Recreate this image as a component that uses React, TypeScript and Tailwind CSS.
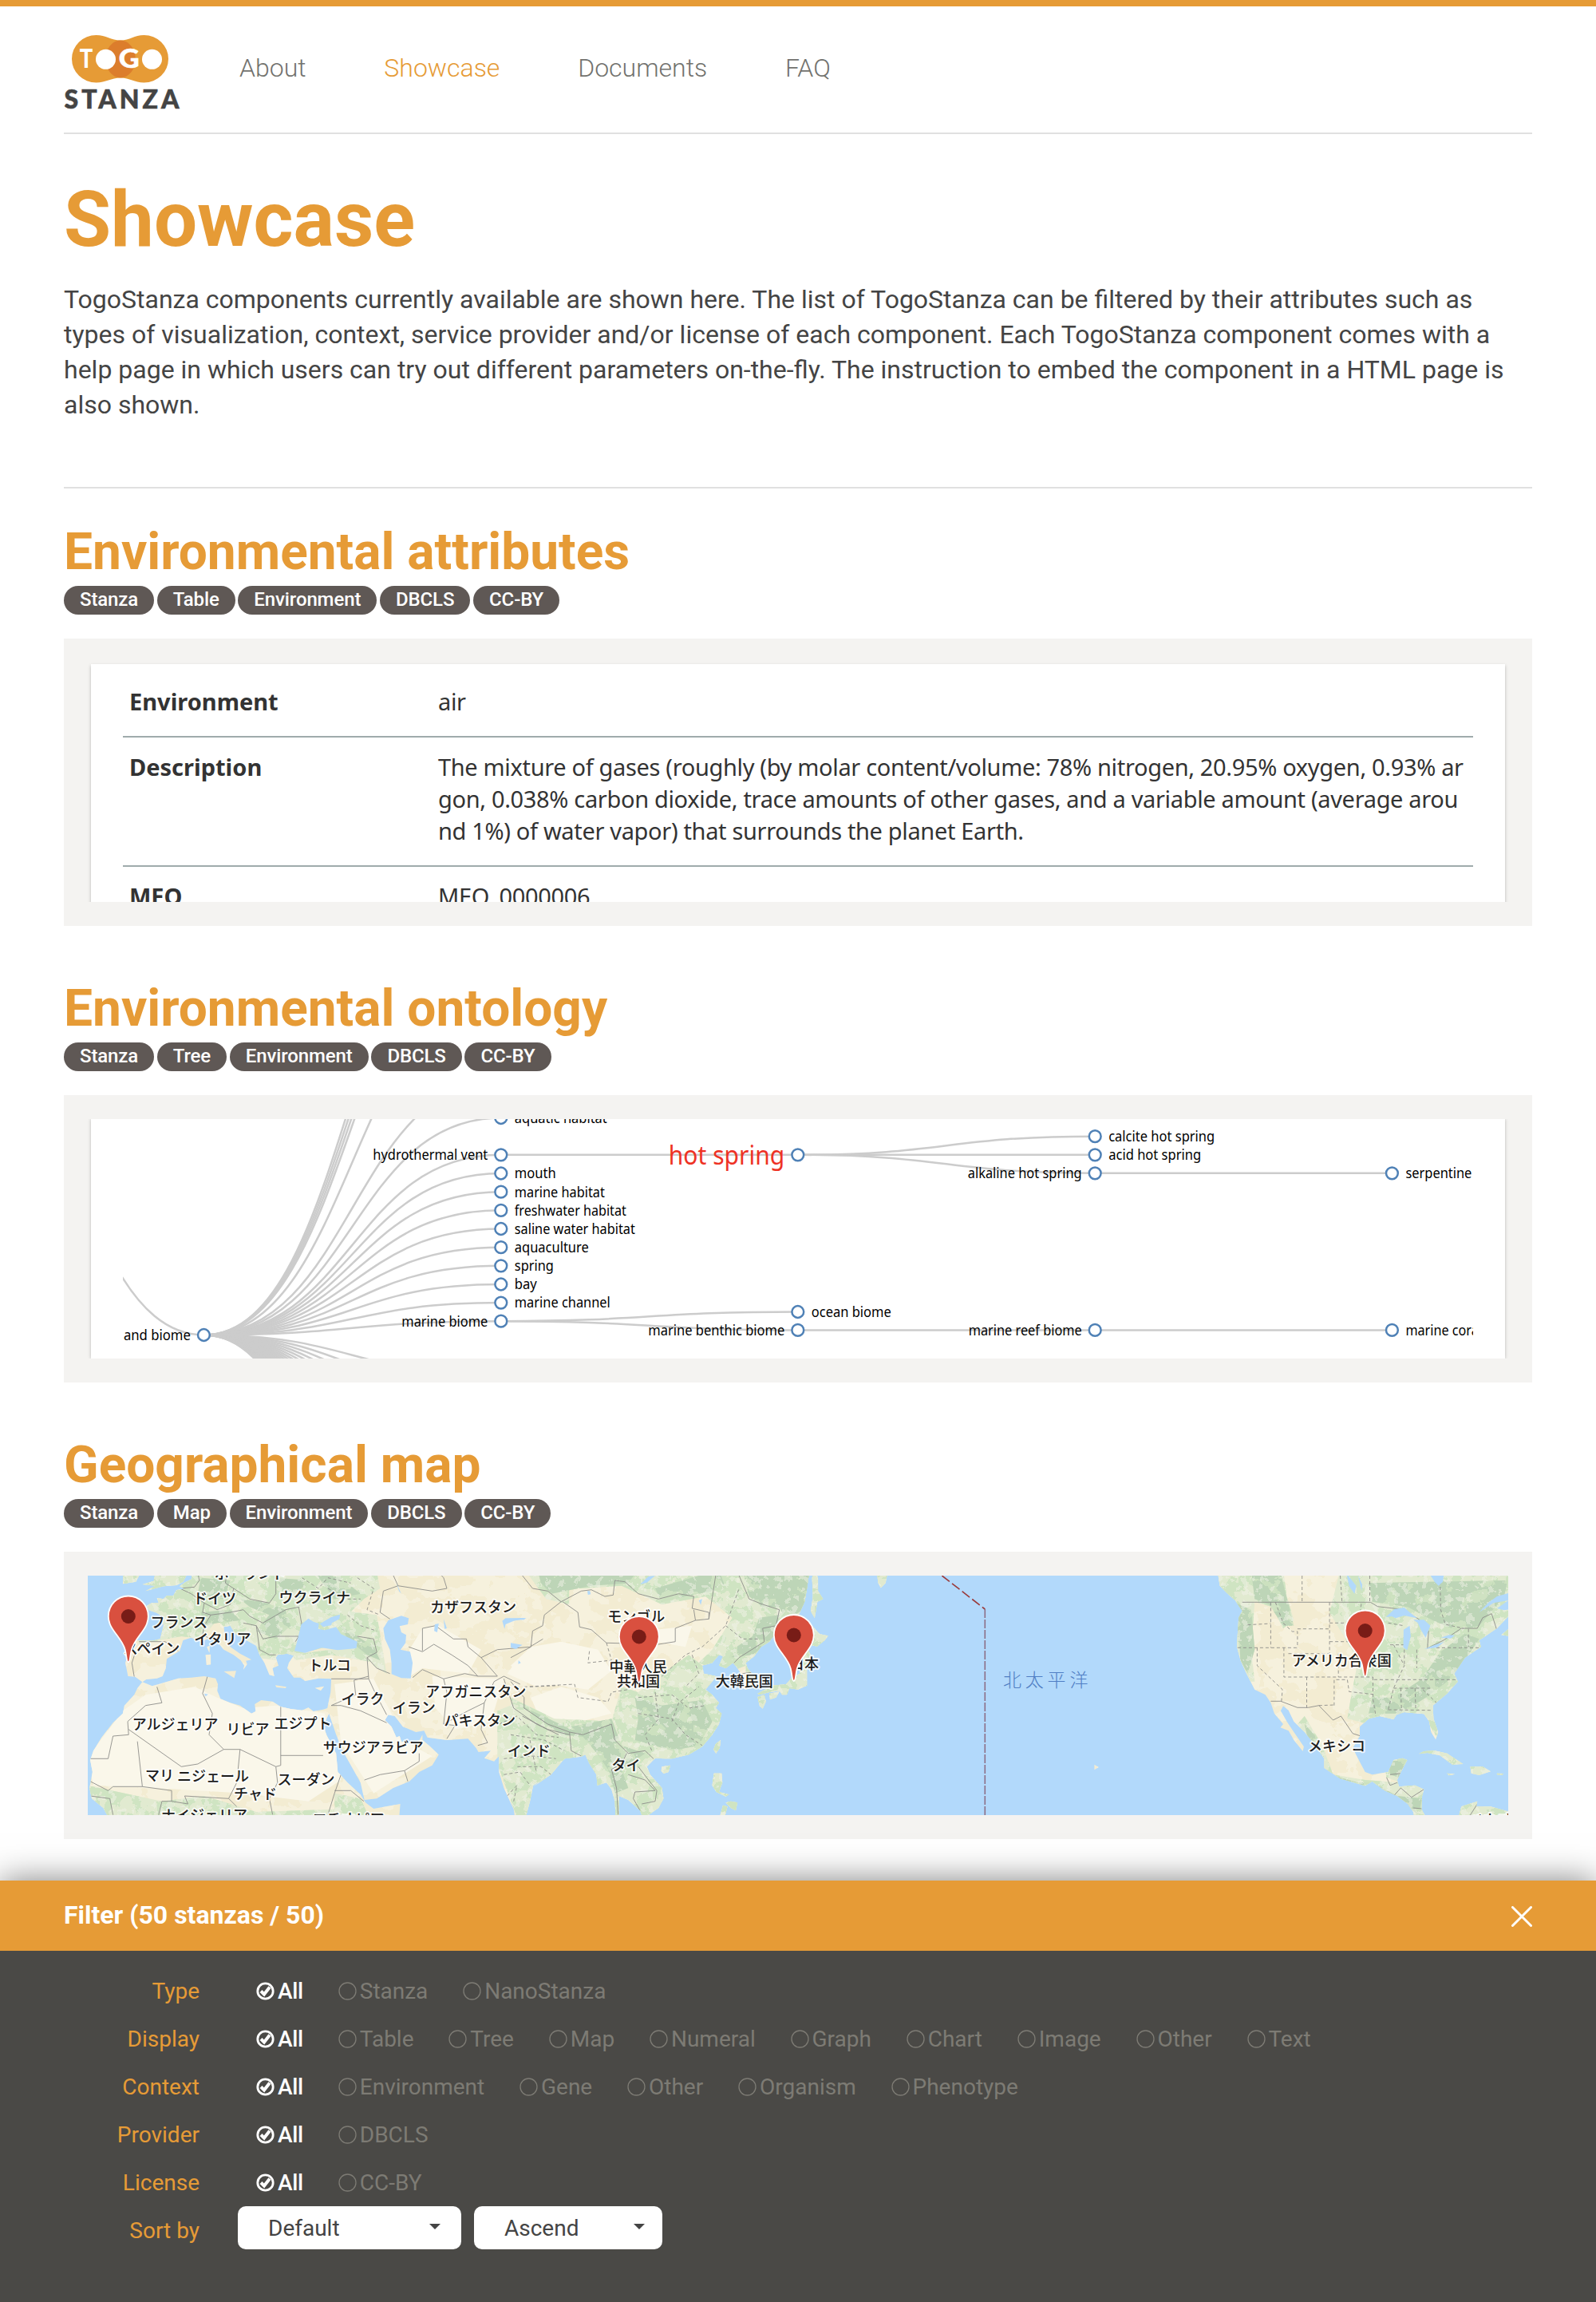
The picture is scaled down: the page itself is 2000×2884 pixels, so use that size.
import React from "react";

type Pt = [number, number];

/* ---------- Logo ---------- */

function Logo() {
  return (
    <svg width="148" height="94" viewBox="78 43 148 94" className="-ml-[2px] block">
      <path
        d="M120.500 44 C133 44 139 50.500 151 50.500 C163 50.500 168 44 180.500 44 A30.500 29.750 0 0 1 180.500 103.500 C168 103.500 163 97.500 151 97.500 C139 97.500 133 103.500 120.500 103.500 A30.500 29.750 0 0 1 120.500 44Z"
        fill="#e69b36"
      />
      <ellipse cx="151" cy="74" rx="18.800" ry="23.500" fill="#dc7d2c" />
      <circle cx="132.500" cy="74.300" r="12.500" fill="#fff" />
      <circle cx="190.500" cy="74.300" r="12.500" fill="#fff" />
      <text x="99.800" y="85.300" fontFamily="Lato" fontWeight="900" fontSize="32" fill="#fff" textLength="16.500" lengthAdjust="spacingAndGlyphs">T</text>
      <text x="148.800" y="85.300" fontFamily="Lato" fontWeight="900" fontSize="32" fill="#fff" stroke="#fff" strokeWidth="0.500" textLength="26" lengthAdjust="spacingAndGlyphs">G</text>
      <text x="80.500" y="135.500" fontFamily="Lato" fontWeight="900" fontSize="32" fill="#444" stroke="#444" strokeWidth="0.600" textLength="144" lengthAdjust="spacing">STANZA</text>
    </svg>
  );
}

/* ---------- Section shell ---------- */

function Section({ title, tags, children }: { title: string; tags: string[]; children: React.ReactNode }) {
  return (
    <section className="h-[572px]">
      <h2 className="h-[74px] text-[64px] leading-[64px] font-bold text-[#e69b36]">{title}</h2>
      <ul className="flex h-9 gap-[3.700px]">
        {tags.map((t) => (
          <li key={t} className="h-9 rounded-full bg-[#5f5855] px-5 text-[24px] leading-[35px] font-medium tracking-[-0.120px] text-white">
            {t}
          </li>
        ))}
      </ul>
      <div className="mt-[30px] h-[360px] bg-[#f4f3f1] py-[30px]">{children}</div>
    </section>
  );
}

/* ---------- Attribute table ---------- */

function Row({ name, lines }: { name: string; lines: string[] }) {
  return (
    <div className="flex border-b-2 border-[#9fabac] pt-[17px] pr-[9px] pb-[23px] pl-[8px] leading-[40px]">
      <div className="w-[387px] shrink-0 font-bold">{name}</div>
      <div className="tracking-[-0.340px] whitespace-nowrap">
        {lines.map((l) => (
          <div key={l}>{l}</div>
        ))}
      </div>
    </div>
  );
}

function AttributeTable() {
  return (
    <div className="h-[300px] overflow-hidden px-[34px] pt-[2px]">
      <div className="h-[400px] bg-white px-10 shadow-[0_2px_4px_rgba(0,0,0,0.25)]">
        <div className="pt-[10px] font-['Noto_Sans'] text-[29px] font-stretch-semi-condensed text-[#333]">
          <Row name="Environment" lines={["air"]} />
          <Row
            name="Description"
            lines={[
              "The mixture of gases (roughly (by molar content/volume: 78% nitrogen, 20.95% oxygen, 0.93% ar",
              "gon, 0.038% carbon dioxide, trace amounts of other gases, and a variable amount (average arou",
              "nd 1%) of water vapor) that surrounds the planet Earth.",
            ]}
          />
          <Row name="MEO" lines={["MEO_0000006"]} />
        </div>
      </div>
    </div>
  );
}

/* ---------- Ontology tree ---------- */

const COL = [255.4, 627.8, 999.8, 1372.2, 1744.4];
const ROOT_Y = 1672.5;

const upperTargets = [1076, 1100, 1123, 1146, 1239, 1354, 1400.5];
const lowerTargets = Array.from({ length: 27 }, (_, i) => 1723 + i * 23.2);

const nodes: { x: number; y: number; label: string; left?: boolean; big?: boolean }[] = [
  { x: COL[0], y: ROOT_Y, label: "and biome", left: true },
  { x: COL[1], y: 1400.5, label: "aquatic habitat" },
  { x: COL[1], y: 1446.8, label: "hydrothermal vent", left: true },
  { x: COL[1], y: 1470, label: "mouth" },
  { x: COL[1], y: 1493.2, label: "marine habitat" },
  { x: COL[1], y: 1516.3, label: "freshwater habitat" },
  { x: COL[1], y: 1539.5, label: "saline water habitat" },
  { x: COL[1], y: 1562.7, label: "aquaculture" },
  { x: COL[1], y: 1585.8, label: "spring" },
  { x: COL[1], y: 1609, label: "bay" },
  { x: COL[1], y: 1632.1, label: "marine channel" },
  { x: COL[1], y: 1655.2, label: "marine biome", left: true },
  { x: COL[2], y: 1446.8, label: "hot spring", left: true, big: true },
  { x: COL[2], y: 1643.5, label: "ocean biome" },
  { x: COL[2], y: 1666.4, label: "marine benthic biome", left: true },
  { x: COL[3], y: 1423.7, label: "calcite hot spring" },
  { x: COL[3], y: 1446.8, label: "acid hot spring" },
  { x: COL[3], y: 1469.8, label: "alkaline hot spring", left: true },
  { x: COL[3], y: 1666.4, label: "marine reef biome", left: true },
  { x: COL[4], y: 1469.8, label: "serpentine" },
  { x: COL[4], y: 1666.4, label: "marine coral reef" },
];

function link(x1: number, y1: number, x2: number, y2: number) {
  const m = (x1 + x2) / 2;
  return `M${x1} ${y1}C${m} ${y1} ${m} ${y2} ${x2} ${y2}`;
}

const labelWidth: Record<string, number> = {
  "and biome": 84,
  "aquatic habitat": 116,
  "hydrothermal vent": 144,
  mouth: 52,
  "marine habitat": 113,
  "freshwater habitat": 140,
  "saline water habitat": 151,
  aquaculture: 93,
  spring: 49,
  bay: 28,
  "marine channel": 120,
  "marine biome": 108,
  "hot spring": 145.5,
  "ocean biome": 100,
  "marine benthic biome": 171,
  "calcite hot spring": 133,
  "acid hot spring": 116,
  "alkaline hot spring": 143,
  "marine reef biome": 142,
  serpentine: 83,
  "marine coral reef": 130,
};

function OntologyTree() {
  const links = [
    link(COL[0] - 372, 1121, COL[0], ROOT_Y),
    ...upperTargets.map((y) => link(COL[0], ROOT_Y, COL[1], y)),
    ...lowerTargets.map((y) => link(COL[0], ROOT_Y, COL[1], y)),
    ...nodes.filter((n) => n.x === COL[1] && n.y > 1440).map((n) => link(COL[0], ROOT_Y, n.x, n.y)),
    link(COL[1], 1446.8, COL[2], 1446.8),
    link(COL[1], 1655.2, COL[2], 1643.5),
    link(COL[1], 1655.2, COL[2], 1666.4),
    link(COL[2], 1446.8, COL[3], 1423.7),
    link(COL[2], 1446.8, COL[3], 1446.8),
    link(COL[2], 1446.8, COL[3], 1469.8),
    link(COL[3], 1469.8, COL[4], 1469.8),
    link(COL[2], 1666.4, COL[3], 1666.4),
    link(COL[3], 1666.4, COL[4], 1666.4),
  ];
  return (
    <div className="h-[300px] overflow-hidden px-[34px]">
      <div className="h-[300px] bg-white px-10 shadow-[0_0_4px_rgba(0,0,0,0.25)]">
        <svg width="1692" height="300" viewBox="154 1402 1692 300" className="block">
          <g fill="none" stroke="#ccc" strokeWidth="2.500">
            {links.map((d, i) => (
              <path key={i} d={d} />
            ))}
          </g>
          {nodes.map((n) => (
            <g key={n.label}>
              <circle cx={n.x} cy={n.y} r="7.400" fill="#fff" stroke="#4f81b6" strokeWidth="2.500" />
              <text
                x={n.left ? n.x - 16.5 : n.x + 17}
                y={n.y + (n.big ? 12 : 6.3)}
                textAnchor={n.left ? "end" : "start"}
                fontFamily="Noto Sans"
                fontSize={n.big ? 33 : 17.5}
                fill={n.big ? "#ee3224" : "#000"}
                textLength={labelWidth[n.label]}
                lengthAdjust="spacingAndGlyphs"
              >
                {n.label}
              </text>
            </g>
          ))}
        </svg>
      </div>
    </div>
  );
}

/* ---------- Geographical map ---------- */

// Each chart sheet has its own grid; the projections below bring them to map pixels.
const west = ([x, y]: Pt): Pt => [x / 2.45 - 50, y / 3 - 184];
const east = ([x, y]: Pt): Pt => [x / 2.3758 + 530, y / 3 - 34];
const usa = ([x, y]: Pt): Pt => [x / 2.24 + 1190, y / 3 - 34];

function parse(s: string): Pt[] {
  return s.trim().split(/\s+/).map((p) => p.split(",").map(Number) as Pt);
}
function shape(proj: (p: Pt) => Pt, s: string) {
  return parse(s).map((p) => proj(p).map((v) => v.toFixed(1)).join(","));
}
const W = (s: string) => shape(west, s).join(" ");
const E = (s: string) => shape(east, s).join(" ");
const A = (s: string) => shape(usa, s).join(" ");

const eurasia =
  W(
    "440,540 442,565 420,578 405,592 420,602 395,606 385,628 365,628 355,640 335,636 340,655 318,655 303,666 310,682 335,692 350,705 355,740 345,790 320,797 280,795 245,795 240,805 246,850 238,880 246,930 268,932 290,952 302,942 335,938 352,930 362,900 365,865 405,835 415,795 440,785 470,800 500,785 520,800 540,830 570,850 592,870 603,890 600,905 612,885 608,872 625,868 590,845 560,820 545,790 540,745 560,740 575,770 610,795 640,815 650,850 665,880 680,925 695,930 690,900 708,890 700,860 705,850 735,845 755,852 740,880 735,900 755,935 775,935 790,948 830,938 870,940 868,990 858,1050 862,1065 870,1095 885,1150 905,1210 935,1275 960,1330 972,1395 1010,1390 1060,1350 1110,1325 1140,1290 1180,1265 1200,1225 1170,1190 1150,1170 1150,1150 1140,1172 1110,1185 1085,1175 1080,1155 1070,1160 1055,1120 1035,1095 1045,1075 1065,1080 1090,1120 1130,1140 1155,1135 1165,1160 1225,1170 1290,1165 1315,1200 1322,1215 1360,1210 1340,1238 1370,1250 1385,1230 1385,1290 1400,1350 1430,1430 1435,1470 1465,1470 1480,1400 1490,1340 1540,1300",
  ) +
  " " +
  E(
    "60,900 85,880 120,850 160,790 210,782 222,775 235,810 255,850 258,890 285,880 300,905 310,950 313,1020 322,1020 322,930 350,945 385,985 395,1020 410,1002 440,975 455,940 450,900 415,850 405,820 430,788 460,790 480,790 530,775 570,745 600,700 620,660 628,620 610,600 620,580 600,550 580,530 600,500 612,480 575,470 570,440 600,430 620,400 632,405 620,440 640,450 662,430 672,445 685,470 680,520 700,530 730,515 725,480 705,450 700,430 725,405 745,370 770,350 800,300 850,270 875,200 882,150 890,80",
  );

const africa = W(
  "858,1050 845,1055 815,1062 800,1048 780,1058 745,1053 715,1045 690,1025 655,1020 635,1035 638,1062 625,1070 590,1040 560,1030 530,1015 520,985 522,960 515,938 480,930 440,935 400,938 340,960 320,967 290,952 275,975 265,1000 235,1040 230,1070 200,1105 165,1160 140,1210 130,1245 137,1290 128,1350 135,1390 170,1425 190,1470 1078,1470 1082,1410 1000,1428 975,1405 960,1375 920,1330 890,1290 885,1220 855,1150 840,1095 850,1105 865,1065",
);

const northAmerica = A(
  "505,80 512,140 530,165 555,195 575,235 565,260 562,320 560,370 570,420 585,465 610,530 640,550 655,580 665,620 690,660 682,673 705,685 720,720 745,762 748,745 720,690 700,650 683,610 690,592 705,608 720,650 750,690 775,730 790,760 805,790 805,825 850,865 920,892 940,875 975,910 1010,930 1040,960 1055,990 1060,1020 1095,1020 1078,980 1080,930 1085,905 1060,890 1015,895 1010,870 1020,840 1038,795 1025,788 1000,795 985,840 940,850 920,840 900,790 885,750 905,705 905,670 930,640 960,630 1000,642 1008,625 1030,615 1085,622 1100,650 1105,690 1118,718 1125,690 1112,640 1110,590 1150,545 1180,500 1170,470 1200,410 1245,370 1240,345 1290,300 1322,255 1330,80",
);

const islands = [
  W("330,540 430,540 415,575 395,588 355,592 300,610 330,590 290,585 325,572"),
  W("232,540 280,552 270,575 230,583"),
  W("540,912 578,910 572,937"),
  W("484,850 500,848 500,886 487,888"),
  W("488,820 497,815 496,842"),
  W("698,964 732,970 730,975 702,972"),
  W("820,974 848,968 838,984"),
  E("905,80 915,110 915,160 930,190 913,200 905,262 893,235 900,180 897,110"),
  E("1090,90 1122,90 1116,130 1102,148 1094,130"),
  E("893,285 920,322 945,328 935,345 912,368 890,362 882,340"),
  E("885,380 893,400 882,430 882,515 855,530 830,525 822,550 808,550 800,535 770,540 740,550 735,545 780,515 820,510 835,488 860,470 868,430 872,395"),
  E("735,558 755,550 760,575 750,602 741,592"),
  E("770,545 800,538 790,560 772,568"),
  E("610,735 625,720 622,750 611,770 604,755"),
  E("450,820 475,815 470,840 455,846 448,836"),
  E("605,845 628,845 630,880 620,915 650,925 640,932 612,915 600,890"),
  E("655,950 675,955 670,985 655,975 640,955"),
  E("622,1010 632,965 645,970 637,1010"),
  A("160,812 172,822 160,832"),
  A("1070,772 1085,762 1115,760 1150,770 1195,810 1165,812 1130,778 1095,768"),
  A("1215,820 1250,820 1272,838 1240,852 1218,845"),
  A("1150,845 1172,848 1155,853"),
  A("1290,845 1308,846 1305,851 1290,850"),
  A("1180,1020 1190,970 1235,950 1232,970 1272,970 1325,990 1330,1020"),
  A("1302,325 1325,300 1330,330"),
];

const lakes = [
  W("778,735 800,713 815,725 832,732 830,752 850,757 885,745 900,772 950,800 947,825 890,832 840,823 790,842 757,835 765,800"),
  W("835,733 870,708 897,698 895,715 872,730 870,738 845,745"),
  W("1045,720 1085,703 1108,712 1105,735 1080,742 1085,765 1100,775 1098,805 1083,830 1112,838 1120,880 1114,938 1085,937 1055,922 1055,880 1050,830 1035,790 1030,750"),
  W("1188,735 1200,732 1195,765 1186,760"),
  W("1215,715 1225,750 1218,752"),
  W("1395,722 1405,712 1470,711 1430,722 1405,735 1402,752"),
  W("1070,580 1085,620 1078,610"),
  W("1445,870 1452,880 1444,884"),
  W("480,995 492,998 484,1006"),
  E("385,135 410,105 430,102 405,128"),
  E("0,355 35,362 15,378 0,372"),
  E("228,160 236,160 238,172 230,174"),
  E("560,195 570,190 566,212"),
  E("0,265 45,262 40,268 0,270"),
  A("978,258 1002,228 1030,222 1045,240 1066,262 1030,252 1005,262 995,255"),
  A("1028,305 1045,290 1048,330 1038,382 1027,372"),
  A("1055,268 1085,268 1103,290 1090,335 1078,310 1068,280"),
  A("1086,378 1110,365 1142,350 1122,372"),
  A("1133,335 1155,325 1172,326 1160,338"),
  A("1240,240 1265,205 1290,180 1322,168 1340,225 1310,232 1290,225 1322,195 1280,205"),
  A("1098,90 1142,90 1138,125 1126,140 1115,125"),
  A("868,95 895,140 890,170 875,140"),
  A("900,102 912,135 910,160"),
];

const deserts = [
  W("230,1060 300,1000 450,970 520,1010 600,1050 700,1040 850,1070 890,1230 900,1320 800,1400 600,1370 330,1350 140,1340 120,1240"),
  W("880,960 1000,940 1050,1060 1100,1180 1180,1230 1000,1370 900,1180"),
  W("1110,830 1150,750 1200,740 1330,830 1290,920 1150,900 1100,940"),
  W("1180,930 1400,940 1360,1100 1250,1130 1190,1050"),
  W("1410,920 1440,870 1600,830 1600,960 1500,970"),
  E("0,440 60,370 150,350 260,380 300,460 230,530 60,500"),
  E("60,560 150,520 260,560 300,620 180,660 80,620"),
  E("400,310 540,290 520,370 430,350"),
];

const greens = [
  W("220,540 1010,540 1020,600 970,640 920,700 950,790 760,850 700,870 640,860 520,720 470,790 410,780 280,810 260,650"),
  W("750,850 960,815 1010,880 870,850 760,870"),
  W("880,680 1010,700 1040,920 1000,890 940,790"),
  W("120,1340 350,1400 480,1380 640,1440 880,1430 880,1370 960,1390 990,1470 120,1470"),
  W("1380,1060 1440,1030 1600,1130 1600,1290 1470,1460 1440,1460 1380,1260"),
  W("1470,540 1600,540 1600,660 1530,640"),
  E("60,80 900,80 900,370 740,420 640,470 560,430 600,380 660,260 580,180 450,210 330,140 210,150 90,150"),
  E("0,560 130,640 300,650 330,520 380,540 440,480 530,400 640,510 660,800 480,1030 200,1030 200,790 60,800 20,900 0,900"),
  E("700,80 960,80 960,700 700,600"),
  E("580,700 720,700 720,1020 580,1020"),
  E("1080,80 1130,80 1130,160 1080,160"),
  A("500,80 690,80 700,180 720,270 690,300 660,220 610,200 600,380 610,500 590,500 550,380"),
  A("850,80 1340,80 1340,330 1180,520 1130,730 1090,640 930,660 870,640 880,560 900,420 820,240"),
  A("750,630 800,740 830,850 920,870 1120,890 1120,1020 1050,1020 900,890 790,830 730,660"),
  A("970,780 1050,780 1020,880 980,860"),
  A("1060,750 1330,750 1330,1020 1170,1020 1100,820"),
];

const forests = [
  W("590,640 660,650 730,680 745,740 700,790 640,760 680,700 620,670"),
  W("470,690 560,680 590,720 520,730 480,740"),
  W("470,560 560,570 540,640 460,620"),
  W("900,740 1000,820 1020,870 980,850 920,790"),
  W("700,560 800,570 780,640 720,610"),
  W("820,540 900,560 960,620 880,640"),
  E("80,80 380,80 350,130 240,140 120,170 90,130"),
  E("430,150 620,80 640,150 520,180 450,200"),
  E("690,80 900,80 870,230 820,270 800,220 750,220 710,180"),
  E("740,260 800,250 780,340 720,400 650,410 660,380 720,330"),
  E("370,560 450,590 570,570 600,650 560,740 480,760 370,720 380,640"),
  E("180,670 300,640 330,740 400,770 330,830 350,900 310,920 290,830 250,760 210,700"),
  E("30,590 180,680 250,690 240,710 150,700"),
  A("600,80 680,80 720,290 690,290 650,210 610,190"),
  A("550,200 600,230 610,380 590,470 570,420 560,280"),
  A("930,130 1320,120 1310,180 1240,290 1180,310 1110,270 1040,220 940,200"),
  A("1130,390 1200,320 1240,340 1200,420 1150,500 1090,560 1020,620 930,620 940,560 1000,560 1080,490"),
  A("750,660 790,720 800,770 760,720"),
  A("820,850 900,880 940,880 1010,930 1080,940 1070,1000 970,910 880,890"),
  A("985,800 1035,795 1015,860 990,850"),
];

const borders = [
  W("460,540 465,570 450,595 405,600"),
  W("405,600 440,620 480,655 475,690 500,700 480,740 475,775 500,790"),
  W("480,655 520,680 560,660 570,600 545,580 550,540"),
  W("570,600 620,640 680,655 700,620 700,540"),
  W("500,700 560,690 600,680 620,705 660,730 730,680 770,670 780,740"),
  W("600,730 640,740 660,790 700,780 770,780 760,800"),
  W("640,740 650,830 680,850 700,850"),
  W("280,800 360,800 400,835"),
  W("270,835 258,880 265,932"),
  W("1060,550 1075,590 1180,610 1225,600 1215,560 1200,540"),
  W("1075,590 1030,610 1020,690 1050,715"),
  W("1120,935 1150,905 1215,940 1280,920 1320,930 1380,930 1330,860 1380,830 1480,820 1520,790"),
  W("1150,835 1150,750 1190,740 1245,790 1285,790 1290,820 1330,860"),
  W("1108,820 1150,838 1185,810 1240,850 1290,890 1320,930"),
  W("950,780 1000,790 1010,840 980,860 985,940 870,940"),
  W("980,860 1010,900 1050,920"),
  W("985,930 940,945 945,1000 870,1040 900,1040 960,1060 1040,1105"),
  W("985,940 1000,980 1025,1040 1040,1075"),
  W("1215,940 1225,990 1215,1110 1250,1115 1225,1165"),
  W("1215,1110 1290,1060 1340,1030 1370,950 1400,930 1450,960"),
  W("1340,1030 1330,1130 1350,1180 1320,1190"),
  W("1400,940 1430,1050 1500,1110 1568,1150"),
  W("715,1045 715,1265 700,1270 590,1205 540,1205 495,1150 505,1070 475,995 490,930"),
  W("715,1228 845,1228"),
  W("335,970 350,1030 300,1040 245,1100 248,1150 200,1155 185,1240 130,1240"),
  W("248,1130 410,1270 460,1260 540,1205"),
  W("275,1175 290,1345 200,1345 185,1360 130,1325"),
  W("590,1205 580,1330 555,1390 580,1420"),
  W("700,1270 705,1330 680,1390 690,1450"),
  W("290,1345 380,1360 380,1400 430,1410 420,1380 555,1390"),
  W("900,1300 880,1370 860,1450"),
  W("880,1360 930,1360 970,1400"),
  W("972,1320 1020,1300 1095,1285 1140,1250 1140,1220"),
  W("1095,1285 1105,1325"),
  W("340,1451 350,1400 380,1400"),
  W("130,1380 190,1390 200,1451"),
  E("35,102 65,150 110,160 150,200 210,160 240,155 280,180 305,175 310,120 340,125 380,170 440,190 500,170 545,180 540,225 590,240 590,265 550,270 490,300 490,350 440,360 285,355 240,305 205,295 200,240 155,200"),
  E("150,200 100,250 95,290 65,310 60,370 0,410"),
  E("0,500 40,560 40,600 110,660 175,690 215,700 300,660 310,720 350,770 400,760 425,790"),
  E("175,690 180,760 210,780"),
  E("35,630 110,680 175,700"),
  E("680,102 710,190 750,210 800,230 790,290 750,300 755,350 680,410 665,430"),
  E("590,265 610,102"),
  E("345,770 330,810 300,830 315,900 320,1000"),
  E("350,850 400,870 430,910 370,915 365,940 385,985"),
  E("380,820 410,870 435,910 430,950 390,960"),
  E("550,270 545,230"),
  E("690,470 722,465"),
  A("575,202 935,202 955,218 1020,228 1070,265 1098,310 1095,375 1140,345 1190,300 1235,300 1250,260 1275,245 1290,308"),
  A("655,574 683,574 730,598 760,598 790,590 830,645 852,630 885,695 908,705"),
  A("980,860 990,890 1010,880"),
  A("1000,930 1020,900 1050,935 1085,905"),
  A("990,850 1020,845"),
  A("1055,975 1080,978"),
  A("1215,1002 1235,960"),
];

const provinces = [
  A("743,102 743,200"),
  A("850,102 855,200"),
  A("933,102 933,200"),
  A("1130,102 1132,230 1145,285 1195,300"),
  A("820,202 820,395 700,395"),
  A("655,202 655,280 655,373"),
  A("668,202 690,280 715,312 730,312 730,373"),
  A("590,287 655,282"),
  A("562,373 730,373"),
  A("617,373 617,440 688,530 685,575"),
  A("692,373 692,483 942,483"),
  A("730,302 820,302"),
  A("820,280 900,280 910,202"),
  A("820,350 900,350"),
  A("756,483 756,598"),
  A("845,395 845,483"),
  A("833,590 833,493 870,493 875,538 942,548"),
  A("790,590 833,588"),
  A("942,483 942,565 950,630"),
  A("945,493 1180,493"),
  A("985,280 1028,290"),
  A("990,362 1037,362"),
  A("1000,362 1030,440 1000,525 985,605"),
  A("1030,380 1030,440"),
  A("1065,380 1065,450"),
  A("1120,373 1240,373"),
  A("1000,525 1110,525"),
  A("1020,525 1022,610"),
  A("1060,525 1062,605"),
  A("985,606 1105,608"),
  A("1082,530 1120,580"),
  A("1210,302 1210,370"),
  E("285,355 300,420 230,430 235,380"),
  E("40,520 190,510 200,560 290,575 300,540 350,530"),
  E("350,400 380,470 450,480 520,400 570,370 640,290 680,150"),
  E("380,560 480,550 530,600 580,590"),
  E("380,620 480,640 520,700 570,740"),
  E("430,540 440,640 400,700 420,760"),
  E("480,650 500,580 560,520"),
  E("540,400 560,470 520,520"),
  E("640,290 690,340 740,340"),
  E("0,700 100,720 160,760"),
  E("20,820 90,820 120,850"),
  W("1385,1110 1440,1080 1500,1150 1568,1160"),
  W("1400,1240 1490,1230 1560,1240"),
  W("1400,1300 1450,1290 1480,1340"),
  W("1410,1380 1440,1340 1430,1400"),
  W("1480,1170 1500,1290"),
  W("950,560 1000,600 980,680 1020,700"),
  W("860,600 920,640 960,640"),
  W("780,560 830,600 860,560 930,580"),
  W("920,700 960,740 1010,760"),
  W("1480,970 1568,965"),
];

const labels: [string, number, number][] = [
  ["ポーランド", 204, -3],
  ["ドイツ", 159, 28],
  ["ウクライナ", 284.3, 27],
  ["フランス", 114.3, 58],
  ["イタリア", 168.8, 79],
  ["スペイン", 80, 91],
  ["カザフスタン", 483, 39],
  ["トルコ", 303, 112],
  ["イラク", 344.5, 154.5],
  ["イラン", 408.8, 165],
  ["アフガニスタン", 486.3, 145.5],
  ["パキスタン", 491.2, 181.5],
  ["アルジェリア", 109.6, 186],
  ["リビア", 200.4, 192.5],
  ["エジプト", 269.4, 185.5],
  ["サウジアラビア", 357.8, 215],
  ["インド", 552.7, 219],
  ["マリ", 90, 250],
  ["ニジェール", 157, 251],
  ["チャド", 210, 273],
  ["スーダン", 273.5, 255],
  ["ナイジェリア", 146, 300],
  ["エチオピア", 326.5, 305],
  ["モンゴル", 687.2, 51],
  ["中華人民", 689.5, 114],
  ["共和国", 690, 132],
  ["大韓民国", 822.7, 132],
  ["日本", 898, 110.5],
  ["タイ", 674.6, 237.5],
  ["アメリカ合衆国", 1571.3, 106.5],
  ["メキシコ", 1565, 213.5],
  ["ベネズエラ", 1775, 306],
];

const pins: Pt[] = [
  [50.8, 51],
  [690.8, 76.5],
  [884.8, 74.5],
  [1600.7, 69],
];

function Noise({ id, freq, seed, levels, color }: { id: string; freq: string; seed: number; levels: string; color: string }) {
  return (
    <filter id={id} x="0" y="0" width="1780" height="300" filterUnits="userSpaceOnUse" colorInterpolationFilters="sRGB">
      <feTurbulence type="fractalNoise" baseFrequency={freq} numOctaves={4} seed={seed} />
      <feColorMatrix values="0 0 0 0 0  0 0 0 0 0  0 0 0 0 0  1 0 0 0 0" />
      <feComponentTransfer result="m">
        <feFuncA type="discrete" tableValues={levels} />
      </feComponentTransfer>
      <feFlood floodColor={color} />
      <feComposite in2="m" operator="in" result="c" />
      <feComposite in="c" in2="SourceGraphic" operator="in" />
    </filter>
  );
}

function GeoMap() {
  const land = [eurasia, africa, northAmerica, ...islands];
  const poly = (list: string[]) => list.map((p, i) => <polygon key={i} points={p} />);
  const line = (list: string[]) => list.map((p, i) => <polyline key={i} points={p} />);
  return (
    <div className="mx-[30px] h-[300px] overflow-hidden">
      <svg width="1780" height="300" viewBox="0 0 1780 300" className="block">
        <defs>
          <clipPath id="land">{poly(land)}</clipPath>
          <Noise id="pale" freq="0.03 0.035" seed={4} levels="0 0 0 0 0 1 1 1 1 1" color="#faf6e8" />
          <Noise id="leaf" freq="0.045 0.05" seed={9} levels="0 0 0 0 0 1 1 1 1 1" color="#cfe4c2" />
          <Noise id="deep" freq="0.05 0.055" seed={21} levels="0 0 0 0 1 1 1 1 1 1" color="#bdd5b7" />
          <Noise id="snow" freq="0.11 0.12" seed={33} levels="0 0 0 0 0 0 1 1 1 1" color="#f3f3ea" />
        </defs>
        <rect width="1780" height="300" fill="#b2d9fb" />
        <g clipPath="url(#land)">
          <rect width="1780" height="300" fill="#f3ecd2" />
          <rect width="1780" height="300" filter="url(#pale)" opacity="0.5" />
          <g fill="#faf7ea">{poly(deserts)}</g>
          <g fill="#e1ead0">{poly(greens)}</g>
          <g filter="url(#leaf)">{poly(greens)}</g>
          <g fill="#cbe0be" opacity="0.8">{poly(forests)}</g>
          <g filter="url(#deep)">{poly(forests)}</g>
          <g filter="url(#snow)" opacity="0.45">{poly(greens)}</g>
          <g fill="none" stroke="#8d8d8a" strokeWidth="0.900">{line(borders)}</g>
          <g fill="none" stroke="#8d8d8a" strokeWidth="0.900" strokeDasharray="4 3">{line(provinces)}</g>
        </g>
        <g fill="#b2d9fb">{poly(lakes)}</g>
        <g fill="none" strokeWidth="1.600">
          <polyline points={E("1284,102 1412,228")} stroke="#9a3a3a" strokeDasharray="12 4" />
          <polyline points={E("1412,228 1412,1002")} stroke="#8c6f86" strokeDasharray="11 2" />
        </g>
        <g
          fontFamily="'Noto Sans CJK JP', sans-serif"
          fontWeight="500"
          fontSize="18"
          fill="#1c1c1c"
          stroke="#fff"
          strokeOpacity="0.75"
          strokeWidth="4"
          strokeLinejoin="round"
          paintOrder="stroke"
          textAnchor="middle"
        >
          {labels.map(([t, x, y]) => (
            <text key={t} x={x} y={y + 6.6}>
              {t}
            </text>
          ))}
        </g>
        <text x="1147" y="138.500" fontFamily="'Noto Sans CJK JP', sans-serif" fontWeight="300" fontSize="23" letterSpacing="4.800" fill="#4f7ec4">
          北太平洋
        </text>
        {pins.map(([x, y]) => (
          <g key={x} transform={`translate(${x} ${y})`}>
            <path
              d="M0 57.500C-2.500 57.500 -2 50 -4 42C-8 26 -25 17 -25 0A25 25.500 0 0 1 25 0C25 17 8 26 4 42C2 50 2.500 57.500 0 57.500Z"
              fill="#d9503f"
              stroke="#fff"
              strokeWidth="1.800"
            />
            <circle r="9" fill="#781c17" />
          </g>
        ))}
      </svg>
    </div>
  );
}

/* ---------- Filter panel ---------- */

const filters: [string, string[]][] = [
  ["Type", ["Stanza", "NanoStanza"]],
  ["Display", ["Table", "Tree", "Map", "Numeral", "Graph", "Chart", "Image", "Other", "Text"]],
  ["Context", ["Environment", "Gene", "Other", "Organism", "Phenotype"]],
  ["Provider", ["DBCLS"]],
  ["License", ["CC-BY"]],
];

function Checked() {
  return (
    <svg width="23" height="23" viewBox="0 0 23 23" fill="none" stroke="#fff" className="-mt-[2px]">
      <circle cx="11.500" cy="11.500" r="9.700" strokeWidth="2.800" />
      <path d="M6 11.500L10 15.500L17 6.500" strokeWidth="4" />
    </svg>
  );
}

function Unchecked() {
  return (
    <svg width="23" height="23" viewBox="0 0 23 23" fill="none" stroke="#7d7b74" className="-mt-[2px]">
      <circle cx="11.500" cy="11.500" r="10.500" strokeWidth="1.300" />
    </svg>
  );
}

function Select({ label, className }: { label: string; className: string }) {
  return (
    <div className={`flex h-[54px] items-center justify-between rounded-[10px] bg-white pl-[38px] text-[#444] ${className}`}>
      <span className="pt-[2px]">{label}</span>
      <svg width="14" height="7" viewBox="0 0 14 7" className="mb-[3px]">
        <path d="M0 0H14L7 7Z" fill="#444" />
      </svg>
    </div>
  );
}

function FilterPanel() {
  return (
    <aside className="h-[528px] bg-[#4a4946] text-[28px] shadow-[0_0_40px_rgba(0,0,0,0.5)]">
      <div className="flex h-[88px] items-center justify-between bg-[#e69b36] px-[80px] text-white">
        <span className="pb-[2px] text-[32px] font-bold">Filter (50 stanzas / 50)</span>
        <svg width="26" height="26" viewBox="0 0 26 26" className="mt-[2px]" stroke="#fff" strokeWidth="3" strokeLinecap="round">
          <path d="M1.500 1.500L24.500 24.500M24.500 1.500L1.500 24.500" />
        </svg>
      </div>
      <div className="pt-[21px]">
        {filters.map(([name, opts]) => (
          <div key={name} className="flex h-[60px] items-center">
            <div className="w-[250px] text-right text-[#e69b36]">{name}</div>
            <div className="ml-[71px] flex gap-[43.800px]">
              <span className="flex items-center gap-[4px] font-medium tracking-[-0.300px] text-white">
                <Checked />
                All
              </span>
              {opts.map((o) => (
                <span key={o} className="flex items-center gap-[4px] text-[#7d7b74]">
                  <Unchecked />
                  {o}
                </span>
              ))}
            </div>
          </div>
        ))}
        <div className="flex h-[60px]">
          <div className="w-[250px] text-right leading-[60px] text-[#e69b36]">Sort by</div>
          <div className="-mt-[1px] ml-12 flex gap-4">
            <Select label="Default" className="w-[280px] pr-[26px]" />
            <Select label="Ascend" className="w-[236px] pr-[22px]" />
          </div>
        </div>
      </div>
    </aside>
  );
}

/* ---------- Page ---------- */

export default function App() {
  return (
    <div className="h-[2884px] w-[2000px] overflow-hidden bg-white font-[Roboto] text-[#444]">
      <div className="h-2 bg-[#e69b36]" />
      <main className="px-20">
        <header className="flex h-[160px] border-b-2 border-[#e0e0e0] pt-[35px]">
          <Logo />
          <nav className="ml-[74px] flex h-[84px] items-center gap-[97.800px] text-[32px] font-light text-[#72726e]">
            <a>About</a>
            <a className="text-[#e69b36]">Showcase</a>
            <a>Documents</a>
            <a>FAQ</a>
          </nav>
        </header>
        <h1 className="mt-[59px] text-[96px] leading-[96px] font-bold text-[#e69b36]">Showcase</h1>
        <p className="mt-[30px] h-[259px] border-b-2 border-[#e0e0e0] text-[32px] leading-[44px] whitespace-nowrap">
          TogoStanza components currently available are shown here. The list of TogoStanza can be filtered by their attributes such as
          <br />
          types of visualization, context, service provider and/or license of each component. Each TogoStanza component comes with a
          <br />
          help page in which users can try out different parameters on-the-fly. The instruction to embed the component in a HTML page is
          <br />
          also shown.
        </p>
        <div className="h-[1696px] pt-12">
          <Section title="Environmental attributes" tags={["Stanza", "Table", "Environment", "DBCLS", "CC-BY"]}>
            <AttributeTable />
          </Section>
          <Section title="Environmental ontology" tags={["Stanza", "Tree", "Environment", "DBCLS", "CC-BY"]}>
            <OntologyTree />
          </Section>
          <Section title="Geographical map" tags={["Stanza", "Map", "Environment", "DBCLS", "CC-BY"]}>
            <GeoMap />
          </Section>
        </div>
      </main>
      <div className="mt-12">
        <FilterPanel />
      </div>
    </div>
  );
}
